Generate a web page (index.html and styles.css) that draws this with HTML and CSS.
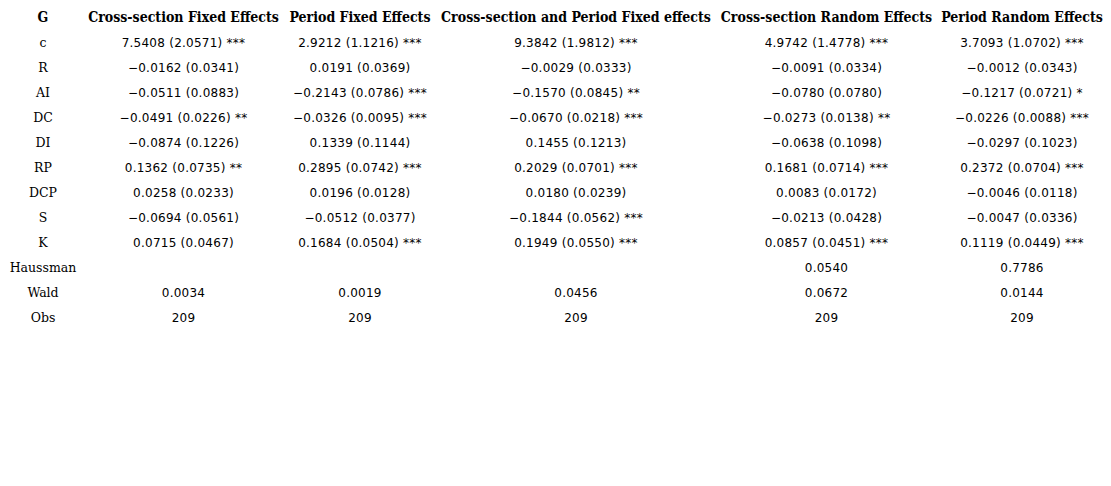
FILE: index.html
```
<!DOCTYPE html>
<html>
<head>
<meta charset="utf-8">
<link rel="stylesheet" href="styles.css">
</head>
<body>
<div class="table">
  <div class="row head">
    <div class="cell">G</div>
    <div class="cell">Cross-section Fixed Effects</div>
    <div class="cell">Period Fixed Effects</div>
    <div class="cell">Cross-section and Period Fixed effects</div>
    <div class="cell">Cross-section Random Effects</div>
    <div class="cell">Period Random Effects</div>
  </div>
  <div class="row">
    <div class="cell label">c</div>
    <div class="cell">7.5408 (2.0571) ***</div>
    <div class="cell">2.9212 (1.1216) ***</div>
    <div class="cell">9.3842 (1.9812) ***</div>
    <div class="cell">4.9742 (1.4778) ***</div>
    <div class="cell">3.7093 (1.0702) ***</div>
  </div>
  <div class="row">
    <div class="cell label">R</div>
    <div class="cell">−0.0162 (0.0341)</div>
    <div class="cell">0.0191 (0.0369)</div>
    <div class="cell">−0.0029 (0.0333)</div>
    <div class="cell">−0.0091 (0.0334)</div>
    <div class="cell">−0.0012 (0.0343)</div>
  </div>
  <div class="row">
    <div class="cell label">AI</div>
    <div class="cell">−0.0511 (0.0883)</div>
    <div class="cell">−0.2143 (0.0786) ***</div>
    <div class="cell">−0.1570 (0.0845) **</div>
    <div class="cell">−0.0780 (0.0780)</div>
    <div class="cell">−0.1217 (0.0721) *</div>
  </div>
  <div class="row">
    <div class="cell label">DC</div>
    <div class="cell">−0.0491 (0.0226) **</div>
    <div class="cell">−0.0326 (0.0095) ***</div>
    <div class="cell">−0.0670 (0.0218) ***</div>
    <div class="cell">−0.0273 (0.0138) **</div>
    <div class="cell">−0.0226 (0.0088) ***</div>
  </div>
  <div class="row">
    <div class="cell label">DI</div>
    <div class="cell">−0.0874 (0.1226)</div>
    <div class="cell">0.1339 (0.1144)</div>
    <div class="cell">0.1455 (0.1213)</div>
    <div class="cell">−0.0638 (0.1098)</div>
    <div class="cell">−0.0297 (0.1023)</div>
  </div>
  <div class="row">
    <div class="cell label">RP</div>
    <div class="cell">0.1362 (0.0735) **</div>
    <div class="cell">0.2895 (0.0742) ***</div>
    <div class="cell">0.2029 (0.0701) ***</div>
    <div class="cell">0.1681 (0.0714) ***</div>
    <div class="cell">0.2372 (0.0704) ***</div>
  </div>
  <div class="row">
    <div class="cell label">DCP</div>
    <div class="cell">0.0258 (0.0233)</div>
    <div class="cell">0.0196 (0.0128)</div>
    <div class="cell">0.0180 (0.0239)</div>
    <div class="cell">0.0083 (0.0172)</div>
    <div class="cell">−0.0046 (0.0118)</div>
  </div>
  <div class="row">
    <div class="cell label">S</div>
    <div class="cell">−0.0694 (0.0561)</div>
    <div class="cell">−0.0512 (0.0377)</div>
    <div class="cell">−0.1844 (0.0562) ***</div>
    <div class="cell">−0.0213 (0.0428)</div>
    <div class="cell">−0.0047 (0.0336)</div>
  </div>
  <div class="row">
    <div class="cell label">K</div>
    <div class="cell">0.0715 (0.0467)</div>
    <div class="cell">0.1684 (0.0504) ***</div>
    <div class="cell">0.1949 (0.0550) ***</div>
    <div class="cell">0.0857 (0.0451) ***</div>
    <div class="cell">0.1119 (0.0449) ***</div>
  </div>
  <div class="row">
    <div class="cell label">Haussman</div>
    <div class="cell"></div>
    <div class="cell"></div>
    <div class="cell"></div>
    <div class="cell">0.0540</div>
    <div class="cell">0.7786</div>
  </div>
  <div class="row">
    <div class="cell label">Wald</div>
    <div class="cell">0.0034</div>
    <div class="cell">0.0019</div>
    <div class="cell">0.0456</div>
    <div class="cell">0.0672</div>
    <div class="cell">0.0144</div>
  </div>
  <div class="row">
    <div class="cell label">Obs</div>
    <div class="cell">209</div>
    <div class="cell">209</div>
    <div class="cell">209</div>
    <div class="cell">209</div>
    <div class="cell">209</div>
  </div>
</div>
</body>
</html>
```

FILE: styles.css
```
html, body {
  margin: 0;
  padding: 0;
  background: #fff;
}
body {
  padding: 5px 0 0 8px;
  font-family: "DejaVu Sans", sans-serif;
  font-size: 12px;
  letter-spacing: 0.25px;
  color: #000;
}
.table {
  display: grid;
  grid-template-columns: 70px 211px 142px 290px 211px 180px;
  width: max-content;
}
.row {
  display: contents;
}
.cell {
  height: 25px;
  display: flex;
  align-items: center;
  justify-content: center;
  white-space: nowrap;
}
.label {
  font-family: "DejaVu Serif", serif;
  font-size: 12.5px;
  letter-spacing: 0;
}
.head .cell {
  box-sizing: border-box;
  padding-bottom: 2px;
  font-family: "DejaVu Serif", serif;
  font-stretch: condensed;
  font-weight: bold;
  font-size: 14px;
  letter-spacing: 0;
}
```
